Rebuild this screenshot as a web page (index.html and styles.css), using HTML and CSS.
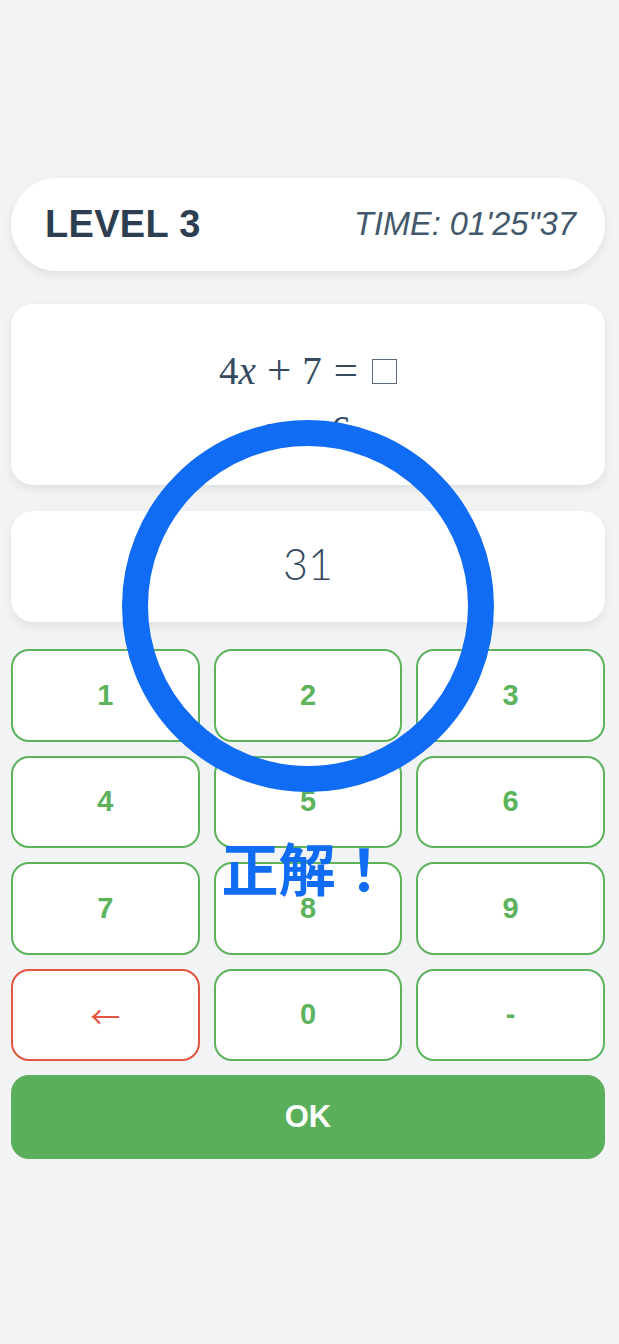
FILE: index.html
```html
<!DOCTYPE html>
<html lang="ja">
<head>
<meta charset="utf-8">
<title>LEVEL 3</title>
<link rel="stylesheet" href="styles.css">
</head>
<body>
<main class="app">
  <header class="topbar">
    <span class="level">LEVEL 3</span>
    <span class="time">TIME: 01'25"37</span>
  </header>
  <section class="card question">
    <div class="eq"><span class="n">4</span><span class="v">x</span><span class="op bin">+</span><span class="n">7</span><span class="op rel">=</span><span class="box"></span></div>
    <div class="eq"><span class="v">x</span><span class="op rel">=</span><span class="n">6</span></div>
  </section>
  <section class="card answer">31</section>
  <section class="keypad">
    <button class="key">1</button>
    <button class="key">2</button>
    <button class="key">3</button>
    <button class="key">4</button>
    <button class="key">5</button>
    <button class="key">6</button>
    <button class="key">7</button>
    <button class="key">8</button>
    <button class="key">9</button>
    <button class="key back">←</button>
    <button class="key">0</button>
    <button class="key">-</button>
  </section>
  <button class="ok">OK</button>
  <div class="result">
    <div class="ring"></div>
    <div class="msg">正解！</div>
  </div>
</main>
</body>
</html>
```
FILE: styles.css
```css
* { box-sizing: border-box; }
html, body { margin: 0; padding: 0; }
body {
  background: #f2f3f5;
  font-family: "Liberation Sans", Arial, sans-serif;
  width: 619px;
  height: 1344px;
  overflow: hidden;
}
.app {
  position: relative;
  padding: 178px 14px 0 11px;
  width: 619px;
  height: 1344px;
  display: flex;
  flex-direction: column;
}
.topbar {
  width: 594px;
  height: 93px;
  background: #fff;
  border-radius: 46px;
  box-shadow: 0 4px 10px rgba(0,0,0,0.08);
  display: flex;
  align-items: center;
  justify-content: space-between;
  padding: 0 29px 0 34px;
}
.level {
  font-weight: bold;
  font-size: 38px;
  color: #2c3e50;
  letter-spacing: 0.3px;
}
.time {
  font-style: italic;
  font-size: 32.5px;
  color: #44586c;
  font-weight: normal;
}
.card {
  width: 594px;
  background: #fff;
  border-radius: 22px;
  box-shadow: 0 4px 10px rgba(0,0,0,0.08);
}
.question {
  margin-top: 33px;
  height: 181px;
  display: flex;
  flex-direction: column;
  align-items: center;
  justify-content: center;
  gap: 10px;
  padding-top: 10px;
  font-family: "Liberation Serif", "Times New Roman", serif;
  font-size: 39px;
  color: #34495e;
}
.eq { display: flex; align-items: baseline; line-height: 48px; }
.eq .v { font-style: italic; }
.eq .op { font-size: 43px; }
.eq .op.bin { margin: 0 11px; }
.eq .op.rel { margin: 0 12px; }
.eq .box {
  display: inline-block;
  width: 25px;
  height: 25px;
  border: 1.5px solid #5a6b7c;
  margin-left: 2px;
}
.answer {
  margin-top: 26px;
  height: 111px;
  display: flex;
  align-items: center;
  justify-content: center;
  padding-bottom: 6px;
  font-family: Lato, sans-serif;
  font-weight: 300;
  font-size: 43px;
  color: #34495e;
}
.keypad {
  margin-top: 27px;
  width: 594px;
  display: grid;
  grid-template-columns: repeat(3, 1fr);
  grid-auto-rows: 92.5px;
  column-gap: 14px;
  row-gap: 14px;
}
.key {
  background: #fff;
  border: 2.5px solid #5cb35c;
  border-radius: 18px;
  color: #5cb35c;
  font-family: "Liberation Sans", Arial, sans-serif;
  font-weight: bold;
  font-size: 29px;
  padding: 0;
}
.key.back {
  border-color: #e35441;
  color: #e35441;
  font-weight: normal;
  font-family: "Noto Sans CJK JP", sans-serif;
  font-size: 30px;
}
.ok {
  margin-top: 14px;
  width: 594px;
  height: 84px;
  background: #5aaf5a;
  border: none;
  border-radius: 18px;
  color: #fff;
  font-family: "Liberation Sans", Arial, sans-serif;
  font-weight: bold;
  font-size: 31px;
}
.result {
  position: absolute;
  left: 0;
  top: 0;
  width: 619px;
  height: 1344px;
  pointer-events: none;
}
.ring {
  position: absolute;
  left: 122px;
  top: 420px;
  width: 372px;
  height: 372px;
  border: 26px solid #106cf5;
  border-radius: 50%;
}
.msg {
  position: absolute;
  left: 0;
  width: 614px;
  top: 832px;
  text-align: center;
  font-family: "Noto Sans CJK JP", "Noto Sans CJK SC", sans-serif;
  font-weight: bold;
  font-size: 57px;
  line-height: 1.2;
  color: #106cf5;
}
```
